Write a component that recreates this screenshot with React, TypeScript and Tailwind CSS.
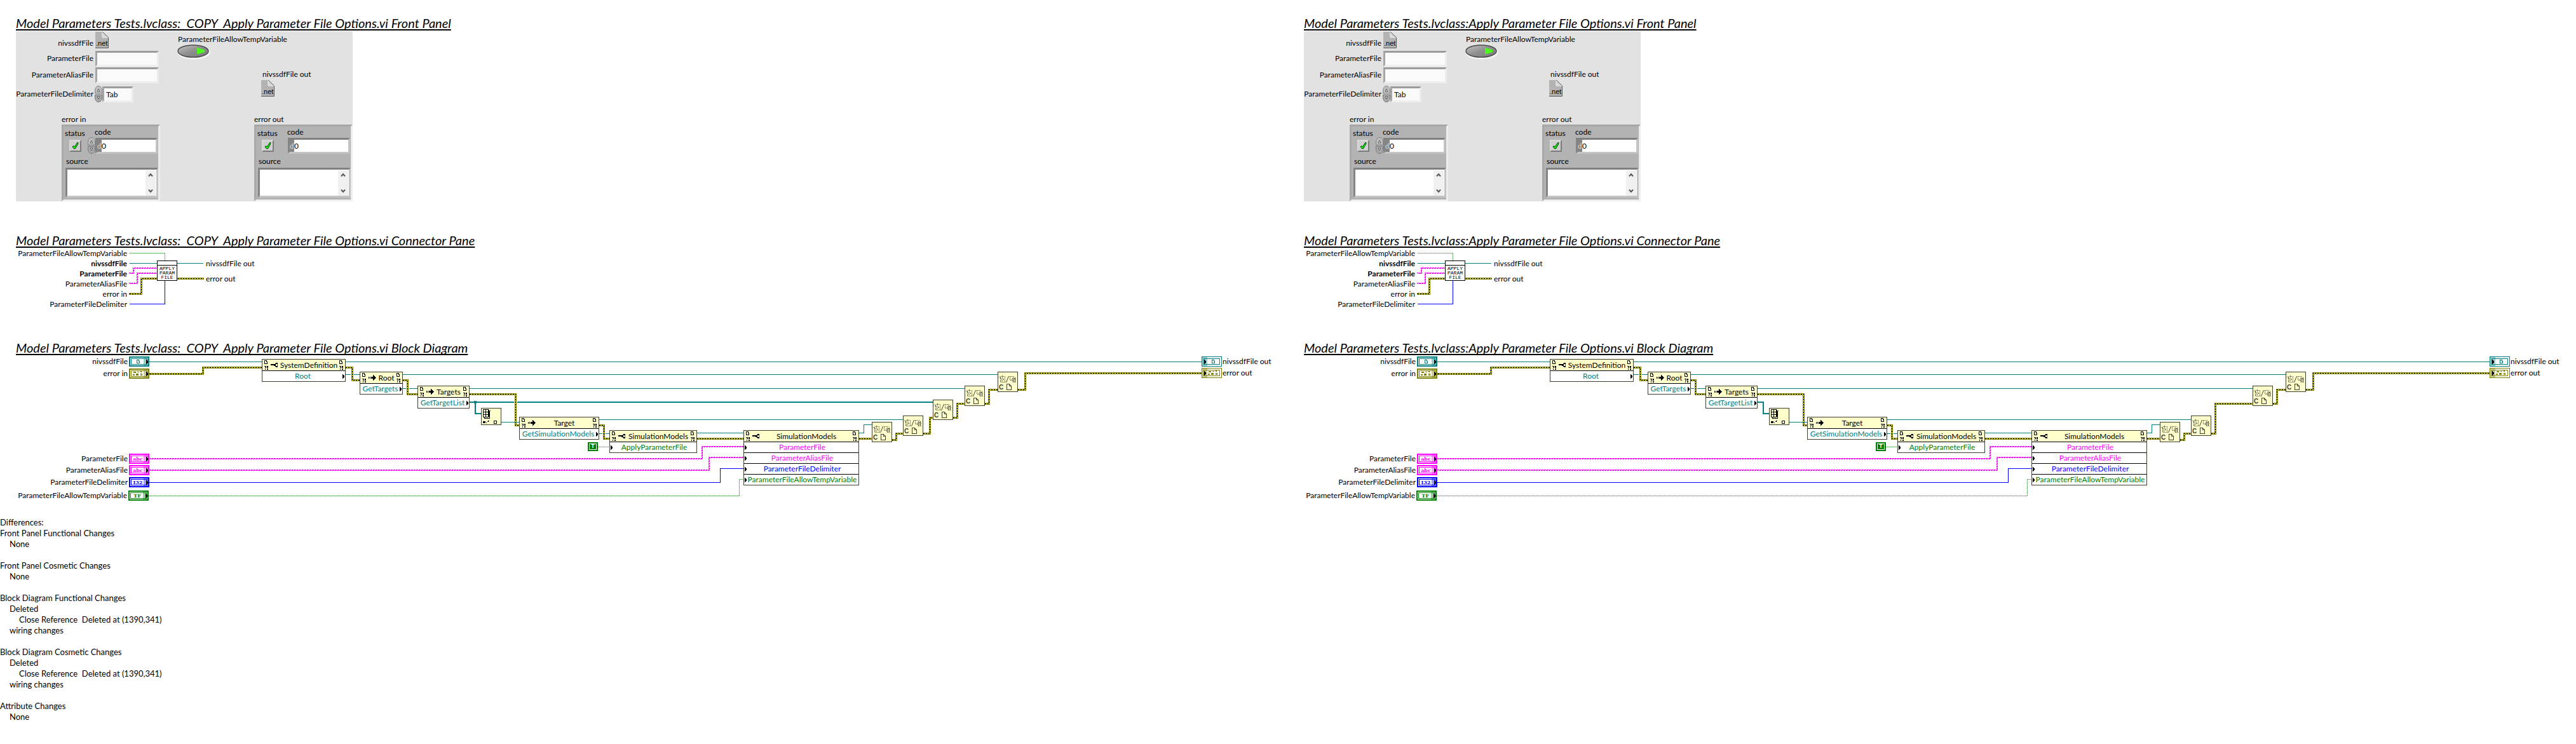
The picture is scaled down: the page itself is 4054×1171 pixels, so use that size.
import { useId, useState } from "react";

type Point = [number, number];

const TEAL = "#008080";
const OLIVE = "#808000";
const PINK = "#ff00ff";
const BLUE = "#0000ff";
const GREEN = "#008000";

const toPoints = (pts: Point[], dx = 0, dy = 0) =>
  pts.map(([x, y]) => `${x + dx},${y + dy}`).join(" ");

/* ---------- Wires ---------- */

function Line({ pts, color, width = 1, dash }: { pts: Point[]; color: string; width?: number; dash?: string }) {
  return <polyline points={toPoints(pts)} fill="none" stroke={color} strokeWidth={width} strokeDasharray={dash} />;
}

function ErrorWire({ pts }: { pts: Point[] }) {
  return (
    <g fill="none">
      <polyline points={toPoints(pts)} stroke="#ffffff" strokeWidth="5" />
      <polyline points={toPoints(pts)} stroke={OLIVE} strokeWidth="3" strokeLinecap="square" />
      <polyline points={toPoints(pts)} stroke="#ffff00" strokeWidth="1" />
      <polyline points={toPoints(pts)} stroke="#000000" strokeWidth="1" strokeDasharray="2 2" />
    </g>
  );
}

function StringWire({ pts }: { pts: Point[] }) {
  return (
    <g fill="none" stroke={PINK} strokeWidth="1">
      <polyline points={toPoints(pts)} strokeDasharray="3 1" />
      <polyline points={toPoints(pts, 1, 1)} strokeDasharray="3 1" strokeDashoffset="2" />
    </g>
  );
}

/* ---------- Small glyphs ---------- */

function NetIcon() {
  return (
    <span className="relative block h-[26px] w-[21px]">
      <svg className="absolute inset-0" width="21" height="26" viewBox="0 0 21 26" aria-hidden="true">
        <path d="M0 0H11L20 9V25H0Z" fill="#b3b3b3" />
        <path d="M11 0V9H20" fill="#d6d6d6" stroke="#f2f2f2" />
        <path d="M11 0L20.5 9V25.5H0" fill="none" stroke="#5a5a5a" />
      </svg>
      <span className="absolute bottom-0 left-px font-['Liberation_Sans'] text-[11px] leading-4 text-black">.net</span>
    </span>
  );
}

function Doc({ color }: { color: string }) {
  return (
    <svg width="5" height="6" viewBox="0 0 5 6" fill="none" stroke={color} aria-hidden="true" shapeRendering="crispEdges">
      <path d="M.5 .5H3.5V2.5H4.5V5.5H.5Z" />
    </svg>
  );
}

function RefMark() {
  return (
    <svg width="6" height="15" viewBox="0 0 6 15" aria-hidden="true" shapeRendering="crispEdges">
      <path d="M.5 .5H3.5V2.5H4.5V5.5H.5Z" fill="none" stroke="#000" />
      <path d="M0 9H3V12H1V11H2V10H0ZM1 13H2V15H1ZM4 9H6V12H4ZM4 13H6V15H4Z" fill="#000" />
    </svg>
  );
}

function KeyGlyph() {
  return (
    <svg width="12" height="9" viewBox="0 0 12 9" aria-hidden="true" shapeRendering="crispEdges">
      <path d="M0 3H7V6H5V5H0ZM7 2H8V7H7ZM8 1H11V3H8ZM8 6H11V8H8ZM10 3H11V4H10ZM10 5H11V6H10Z" fill="#000" />
    </svg>
  );
}

function ArrowGlyph() {
  return (
    <svg width="12" height="9" viewBox="0 0 12 9" aria-hidden="true" shapeRendering="crispEdges">
      <path d="M0 3H1V6H0ZM2 3H3V6H2ZM4 3H8V6H4ZM7 0H8V9H7ZM8 1H9V8H8ZM9 2H10V7H9ZM10 3H11V6H10ZM11 4H12V5H11Z" fill="#000" />
    </svg>
  );
}

function Tip() {
  return (
    <svg width="3" height="7" viewBox="0 0 3 7" aria-hidden="true" shapeRendering="crispEdges">
      <path d="M0 0H1V1H2V2H3V5H2V6H1V7H0Z" fill="#000" />
    </svg>
  );
}

/* ---------- Front panel controls ---------- */

function Spinner({ name }: { name: string }) {
  return (
    <button type="button" aria-label={`Change ${name}`} className="h-[26px] w-3 shrink-0">
      <svg width="12" height="26" viewBox="0 0 12 26" aria-hidden="true">
        <path d="M.5 12V8C.5 3 3 .5 6 .5S11.500 3 11.500 8V12Z" fill="#bdbdbd" stroke="#858585" />
        <path d="M.5 14V18C.5 23 3 25.500 6 25.500S11.500 23 11.500 18V14Z" fill="#a8a8a8" stroke="#777" />
        <path d="M4 9L6 5L8 9Z" fill="#e5e5e5" stroke="#444" strokeWidth=".8" />
        <path d="M4 17L6 21L8 17Z" fill="#e5e5e5" stroke="#444" strokeWidth=".8" />
      </svg>
    </button>
  );
}

const sunken = "border-3 border-t-[#9c9c9c] border-l-[#a6a6a6] border-r-[#ececec] border-b-[#efefef] bg-[#fafafa] outline-none";
const sunkenDark = "border-t-[#808080] border-l-[#858585] border-r-[#c4c4c4] border-b-[#c4c4c4] bg-white";

function Toggle({ labelId }: { labelId: string }) {
  const [on, setOn] = useState(true);
  return (
    <button type="button" role="switch" aria-checked={on} aria-labelledby={labelId} onClick={() => setOn(!on)} className="block">
      <svg width="52" height="24" viewBox="0 0 52 24" aria-hidden="true">
        <defs>
          <linearGradient id="knob" x1="0" y1="0" x2="1" y2="1">
            <stop offset="0" stopColor="#c4c4c4" />
            <stop offset=".5" stopColor="#8e8e8e" />
            <stop offset="1" stopColor="#7a7a7a" />
          </linearGradient>
        </defs>
        <ellipse cx="26" cy="12" rx="26" ry="11.500" fill="#f4f4f4" />
        <ellipse cx="25" cy="10.500" rx="24" ry="9.500" fill="url(#knob)" stroke="#4a4a4a" strokeWidth="1.500" />
        <path d="M31 5L43 8.500V12L31 15.500Z" fill={on ? "#4cf71c" : "#2f6b1f"} />
      </svg>
    </button>
  );
}

function ErrorCluster({ title, control }: { title: string; control: boolean }) {
  const id = useId();
  return (
    <fieldset className="w-[155px]">
      <legend className="leading-[17px]">{title}</legend>
      <div className="h-[121px] border-3 border-t-[#a6a6a6] border-r-[#ededed] border-b-[#efefef] border-l-[#a9a9a9] bg-[#b3b3b3]">
        <div className="flex">
          <div className="w-[35px] pl-[2px]">
            <span id={`${id}-s`} className="block pt-[3px] leading-4">status</span>
            <button type="button" aria-labelledby={`${id}-s`} className="ml-[7px] mt-[2px] block size-[19px] border-2 border-t-[#d8d8d8] border-l-[#d8d8d8] border-r-[#7b7b7b] border-b-[#7b7b7b] bg-[#cfcfcf]">
              <svg width="15" height="15" viewBox="0 0 15 15" aria-hidden="true">
                <path d="M3 9L5 7.500L6.500 9L10.500 2.500H12L11.500 5L7.500 12H5.500Z" fill="#00f800" stroke="#0a3a0a" strokeWidth="1" />
              </svg>
            </button>
          </div>
          <div>
            <label htmlFor={`${id}-c`} className="block pl-[14px] pt-px leading-4">code</label>
            <div className="flex items-center pl-[3px]">
              {control ? <Spinner name="code" /> : <span className="h-[26px] w-3" />}
              <span className={`flex h-[25px] w-[98px] border-3 ${sunkenDark}`}>
                <span className="w-[7px] bg-[#858585] text-[11px] leading-[19px] text-[#d9d9d9]">d</span>
                <input id={`${id}-c`} defaultValue="0" readOnly={!control} className="min-w-0 flex-1 leading-[19px] outline-none" />
              </span>
            </div>
          </div>
        </div>
        <label htmlFor={`${id}-t`} className="mt-1 block pl-1 leading-4">source</label>
        <div className={`ml-[3px] mt-[2px] flex h-[47px] w-[146px] border-3 ${sunkenDark}`}>
          <textarea id={`${id}-t`} readOnly={!control} className="min-w-0 flex-1 resize-none outline-none" />
          <span className="mr-px mt-px flex h-10 w-4 flex-col justify-between bg-[#f0f0f0] py-1">
            <svg width="16" height="6" viewBox="0 0 16 6" fill="none" stroke="#555" strokeWidth="2" aria-hidden="true"><path d="M5 5.500L8 2L11 5.500" /></svg>
            <svg width="16" height="6" viewBox="0 0 16 6" fill="none" stroke="#555" strokeWidth="2" aria-hidden="true"><path d="M5 .5L8 4L11 .5" /></svg>
          </span>
        </div>
      </div>
    </fieldset>
  );
}

function FrontPanel() {
  const id = useId();
  const label = "w-[122px] text-right leading-4";
  return (
    <div className="ml-[25px] flex h-[268px] w-[530px] flex-col bg-[#e2e2e2]">
      <div className="flex h-[130px]">
        <div className="w-[254px]">
          <div className="flex h-[30px] gap-[3px] pt-px">
            <span className={`${label} pt-[10px]`}>nivssdfFile</span>
            <NetIcon />
          </div>
          <div className="flex h-[26px] items-center gap-[3px]">
            <label htmlFor={`${id}-f`} className={label}>ParameterFile</label>
            <input id={`${id}-f`} className={`h-[25px] w-[100px] ${sunken}`} />
          </div>
          <div className="flex h-[26px] items-center gap-[3px]">
            <label htmlFor={`${id}-a`} className={label}>ParameterAliasFile</label>
            <input id={`${id}-a`} className={`h-[25px] w-[100px] ${sunken}`} />
          </div>
          <div className="mt-1 flex h-[26px] items-center">
            <label htmlFor={`${id}-d`} className={`${label} mr-[2px]`}>ParameterFileDelimiter</label>
            <Spinner name="ParameterFileDelimiter" />
            <input id={`${id}-d`} defaultValue="Tab" className={`h-[25px] w-[49px] pl-[3px] ${sunken}`} />
          </div>
        </div>
        <div className="w-[132px] pt-[5px]">
          <span id={`${id}-v`} className="block pl-px leading-4">ParameterFileAllowTempVariable</span>
          <Toggle labelId={`${id}-v`} />
        </div>
        <div className="pt-[60px]">
          <span className="block pb-px pl-[2px] leading-4">nivssdfFile out</span>
          <NetIcon />
        </div>
      </div>
      <div className="flex gap-[148px] pl-[72px]">
        <ErrorCluster title="error in" control />
        <ErrorCluster title="error out" control={false} />
      </div>
    </div>
  );
}

/* ---------- Connector pane ---------- */

const PANE_TOP = 391;
const paneInputs: { name: string; bold?: boolean }[] = [
  { name: "ParameterFileAllowTempVariable" },
  { name: "nivssdfFile", bold: true },
  { name: "ParameterFile", bold: true },
  { name: "ParameterAliasFile" },
  { name: "error in" },
  { name: "ParameterFileDelimiter" },
];

function ConnectorPane() {
  return (
    <div className="relative flex h-[95px]">
      <svg className="absolute left-0 top-0" width="400" height="95" viewBox={`0 ${PANE_TOP} 400 95`} aria-hidden="true" shapeRendering="crispEdges">
        <Line pts={[[204, 398.5], [259.5, 398.5], [259.5, 410]]} color={GREEN} dash="1 1" />
        <Line pts={[[204, 414.5], [320, 414.5]]} color={TEAL} />
        <StringWire pts={[[203, 429.5], [209.5, 429.5], [209.5, 421.5], [247, 421.5]]} />
        <StringWire pts={[[203, 445.5], [215.5, 445.5], [215.5, 429.5], [247, 429.5]]} />
        <ErrorWire pts={[[204, 462.5], [222.5, 462.5], [222.5, 438.5], [319, 438.5]]} />
        <Line pts={[[204, 478.5], [259.5, 478.5], [259.5, 441]]} color={BLUE} />
      </svg>
      <ul className="w-[200px] text-right leading-4">
        {paneInputs.map((p) => (
          <li key={p.name} className={p.bold ? "font-bold" : ""}>{p.name}</li>
        ))}
      </ul>
      <div className="absolute left-[247px] top-[19px] h-8 w-8 border border-black bg-white">
        <div className="h-[7px] border-b border-black" />
        <div className="pt-px text-center font-['Liberation_Mono'] text-[8px] leading-[7px]">
          <div>APPLY</div>
          <div>PARAM</div>
          <div>FILE</div>
        </div>
      </div>
      <ul className="ml-[124px] flex flex-col gap-2 whitespace-nowrap pt-4 leading-4">
        <li>nivssdfFile out</li>
        <li>error out</li>
      </ul>
    </div>
  );
}

/* ---------- Block diagram ---------- */

const TOP = 560;

type Kind = "ref" | "cluster" | "string" | "int" | "bool";

const kindColor: Record<Kind, string> = {
  ref: "border-[#008080] text-[#008080]",
  cluster: "border-[#808000] text-[#808000]",
  string: "border-[#ff00ff] text-[#ff00ff]",
  int: "border-[#0000ff] text-[#0000ff]",
  bool: "border-[#008000] text-[#008000]",
};

const kindTint: Record<Kind, string> = {
  ref: "bg-[#008080]/40",
  cluster: "bg-[#808000]/40",
  string: "bg-[#ff00ff]/40",
  int: "bg-[#0000ff]/40",
  bool: "bg-[#008000]/40",
};

function KindGlyph({ kind }: { kind: Kind }) {
  if (kind === "ref") return <Doc color={TEAL} />;
  if (kind === "cluster")
    return (
      <svg width="16" height="8" viewBox="0 0 16 8" fill={OLIVE} aria-hidden="true" shapeRendering="crispEdges">
        <path d="M1 1H5V3H1ZM7 1H10V2H7ZM0 5H3V7H0ZM5 4H9V7H5ZM12 0H14V2H12Z" />
        <path d="M12.500 4.500H14.500V6.500H12.500Z" fill="none" stroke={OLIVE} />
      </svg>
    );
  const text = kind === "string" ? "abc" : kind === "int" ? "I32" : "TF";
  return <span className="font-['DejaVu_Serif'] text-[8px] font-bold leading-[8px]">{text}</span>;
}

function Terminal({ kind, out = false }: { kind: Kind; out?: boolean }) {
  return (
    <span className={`relative flex h-4 w-8 shrink-0 bg-white p-px ${out ? "border" : "border-2"} ${kindColor[kind]}`}>
      <span className={`flex flex-1 items-center justify-center border border-current ${out ? "m-px pl-1" : "pr-1"}`}>
        <KindGlyph kind={kind} />
      </span>
      <span className={`absolute flex w-[9px] items-center justify-end pr-[2px] ${kindTint[kind]} ${out ? "-inset-y-px -left-px" : "-inset-y-[2px] -right-[2px]"}`}>
        <Tip />
      </span>
    </span>
  );
}

const sources: { name: string; kind: Kind; y: number; end: number }[] = [
  { name: "nivssdfFile", kind: "ref", y: 561, end: 235 },
  { name: "error in", kind: "cluster", y: 580, end: 235 },
  { name: "ParameterFile", kind: "string", y: 714, end: 235 },
  { name: "ParameterAliasFile", kind: "string", y: 732, end: 235 },
  { name: "ParameterFileDelimiter", kind: "int", y: 751, end: 235 },
  { name: "ParameterFileAllowTempVariable", kind: "bool", y: 772, end: 234 },
];

const sinks: { name: string; kind: Kind; y: number }[] = [
  { name: "nivssdfFile out", kind: "ref", y: 561 },
  { name: "error out", kind: "cluster", y: 579 },
];

interface NodeSpec {
  x: number;
  y: number;
  w: number;
  title: string;
  glyph: "key" | "arrow";
  rows: { text: string; color: string; input?: boolean }[];
}

const nodes: NodeSpec[] = [
  { x: 412, y: 565, w: 132, title: "SystemDefinition", glyph: "key", rows: [{ text: "Root", color: "text-[#008080]" }] },
  { x: 566, y: 585, w: 68, title: "Root", glyph: "arrow", rows: [{ text: "GetTargets", color: "text-[#008080]" }] },
  { x: 657, y: 607, w: 82, title: "Targets", glyph: "arrow", rows: [{ text: "GetTargetList", color: "text-[#008080]" }] },
  { x: 817, y: 656, w: 126, title: "Target", glyph: "arrow", rows: [{ text: "GetSimulationModels", color: "text-[#008080]" }] },
  { x: 959, y: 677, w: 138, title: "SimulationModels", glyph: "key", rows: [{ text: "ApplyParameterFile", color: "text-[#008000]", input: true }] },
  {
    x: 1170,
    y: 677,
    w: 182,
    title: "SimulationModels",
    glyph: "key",
    rows: [
      { text: "ParameterFile", color: "text-[#ff00ff]", input: true },
      { text: "ParameterAliasFile", color: "text-[#ff00ff]", input: true },
      { text: "ParameterFileDelimiter", color: "text-[#0000ff]", input: true },
      { text: "ParameterFileAllowTempVariable", color: "text-[#008000]", input: true },
    ],
  },
];

function ClassNode({ node }: { node: NodeSpec }) {
  return (
    <div className="absolute border border-[#404030] bg-white" style={{ left: node.x, top: node.y - TOP, width: node.w }}>
      <div className="flex h-[17px] items-center bg-[#ffffcc] px-[3px]">
        <RefMark />
        <span className="ml-1 w-3">{node.glyph === "key" ? <KeyGlyph /> : <ArrowGlyph />}</span>
        <span className="flex flex-1 justify-center whitespace-nowrap leading-4">
          <span>{node.title}</span>
        </span>
        <RefMark />
      </div>
      {node.rows.map((r) => (
        <div key={r.text} className={`relative flex h-[17px] items-center justify-center border-t border-black ${r.color} ${r.input ? "pl-[3px]" : "pr-[3px]"}`}>
          <span className="whitespace-nowrap leading-4">{r.text}</span>
          <span className={`absolute top-[5px] ${r.input ? "left-px" : "right-px"}`}><Tip /></span>
        </div>
      ))}
    </div>
  );
}

function CloseReference({ x, y }: { x: number; y: number }) {
  return (
    <div className="absolute size-8 border border-[#404030] bg-[#ffffcc]" style={{ left: x, top: y - TOP }}>
      <svg width="30" height="30" viewBox="0 0 30 30" fill="none" stroke="#404030" aria-hidden="true">
        <path d="M3.500 6.500H10.500V15.500H3.500Z" strokeDasharray="1 1" shapeRendering="crispEdges" />
        <path d="M1 7.500H5M3 9.500H8M5 11.500H9M4 13.500H8M6 5.500L9 12" strokeDasharray="1 1" shapeRendering="crispEdges" />
        <path d="M12.500 16L16.500 6" />
        <path d="M18 6.500H25M18.500 7V12.500H22M25.500 9.500L28 12M22 9.500H27M21 11.500H28M22 13.500H28M23 15.500H28M23.500 8V15M26.500 8V16" strokeDasharray="1 1" shapeRendering="crispEdges" />
        <path d="M13.500 18.500H17.500L20.500 21.500V27.500H13.500ZM17.500 18.500V21.500H20.500" shapeRendering="crispEdges" />
      </svg>
      <span className="absolute bottom-px left-px font-['Liberation_Sans'] text-[10px] font-bold leading-[10px] text-[#404030]">C</span>
    </div>
  );
}

function IndexArray() {
  return (
    <div className="absolute left-[757px] top-[82px] h-[27px] w-8 border border-[#404030] bg-[#ffffcc]">
      <svg width="30" height="25" viewBox="0 0 30 25" fill="none" stroke="#000" aria-hidden="true" shapeRendering="crispEdges">
        <path d="M4.500 3.500V15.500H12.500V3.500M11 1.500V13M13 2.500V4" />
        <path d="M2.500 1.500H10.500V13.500H2.500ZM2.500 5.500H10.500M2.500 9.500H10.500M6.500 1.500V13.500" fill="#ffffcc" />
        <path d="M2 20H6V23H2ZM7 22H8V23H7ZM9 20H11V21H9ZM10 19H12V20H10Z" fill="#000" stroke="none" />
        <path d="M19.500 19.500H23.500V23.500H19.500Z" />
      </svg>
    </div>
  );
}

interface Variant {
  closers: Point[];
  listToCloser: boolean;
  bridge: Point[][];
}

const copyVariant: Variant = {
  closers: [[1372, 664], [1421, 654], [1468, 629], [1518, 607], [1570, 585]],
  listToCloser: true,
  bridge: [
    [[1453, 682.5], [1463.5, 682.5], [1463.5, 657.5], [1468, 657.5]],
    [[1500, 657.5], [1506.5, 657.5], [1506.5, 635.5], [1518, 635.5]],
  ],
};

const originalVariant: Variant = {
  closers: [[1372, 664], [1421, 654], [1518, 607], [1570, 585]],
  listToCloser: false,
  bridge: [[[1453, 682.5], [1459.5, 682.5], [1459.5, 635.5], [1518, 635.5]]],
};

function BlockDiagram({ variant }: { variant: Variant }) {
  return (
    <div className="relative h-[230px]">
      <svg className="absolute left-0 top-0" width="1900" height="230" viewBox={`0 ${TOP} 1900 230`} aria-hidden="true" shapeRendering="crispEdges">
        <Line pts={[[235, 569.5], [1891, 569.5]]} color={TEAL} />
        <Line pts={[[544, 589.5], [1570, 589.5]]} color={TEAL} />
        <Line pts={[[634, 611.5], [1518, 611.5]]} color={TEAL} />
        {variant.listToCloser && (
          <>
            <Line pts={[[739, 633], [1468, 633]]} color={TEAL} width={2} />
            <circle cx="748" cy="633" r="2.500" fill={TEAL} />
          </>
        )}
        <Line pts={[[739, 633], [748, 633], [748, 651], [757, 651]]} color={TEAL} width={2} />
        <ErrorWire pts={[[236, 588.5], [319.5, 588.5], [319.5, 578.5], [412, 578.5]]} />
        <ErrorWire pts={[[544, 578.5], [554.5, 578.5], [554.5, 598.5], [566, 598.5]]} />
        <ErrorWire pts={[[634, 598.5], [641.5, 598.5], [641.5, 620.5], [657, 620.5]]} />
        <ErrorWire pts={[[739, 620.5], [811.5, 620.5], [811.5, 669.5], [817, 669.5]]} />
        <Line pts={[[789, 664.5], [817, 664.5]]} color={TEAL} />
        <Line pts={[[943, 660.5], [1421, 660.5]]} color={TEAL} />
        <Line pts={[[943, 682.5], [959, 682.5]]} color={TEAL} />
        <ErrorWire pts={[[943, 669.5], [950.5, 669.5], [950.5, 690.5], [959, 690.5]]} />
        <Line pts={[[1097, 681.5], [1170, 681.5]]} color={TEAL} />
        <ErrorWire pts={[[1097, 690.5], [1170, 690.5]]} />
        <Line pts={[[941, 703.5], [959, 703.5]]} color={GREEN} dash="1 1" />
        <StringWire pts={[[235, 721.5], [1104.5, 721.5], [1104.5, 702.5], [1170, 702.5]]} />
        <StringWire pts={[[235, 739.5], [1115.5, 739.5], [1115.5, 719.5], [1170, 719.5]]} />
        <Line pts={[[235, 759.5], [1133.5, 759.5], [1133.5, 737.5], [1170, 737.5]]} color={BLUE} />
        <Line pts={[[234, 780.5], [1163.5, 780.5], [1163.5, 754.5], [1170, 754.5]]} color={GREEN} dash="1 1" />
        <Line pts={[[1352, 681.5], [1359.5, 681.5], [1359.5, 668.5], [1372, 668.5]]} color={TEAL} />
        <ErrorWire pts={[[1352, 690.5], [1372, 690.5]]} />
        <ErrorWire pts={[[1404, 692.5], [1410.5, 692.5], [1410.5, 682.5], [1421, 682.5]]} />
        {variant.bridge.map((pts, i) => (
          <ErrorWire key={i} pts={pts} />
        ))}
        <ErrorWire pts={[[1550, 635.5], [1556.5, 635.5], [1556.5, 613.5], [1570, 613.5]]} />
        <ErrorWire pts={[[1602, 613.5], [1613.5, 613.5], [1613.5, 587.5], [1891, 587.5]]} />
      </svg>

      {sources.map((s) => (
        <div key={s.name} className="absolute left-0 flex h-4 items-center justify-end gap-[2px] whitespace-nowrap leading-4" style={{ top: s.y - TOP, width: s.end }}>
          <span>{s.name}</span>
          <Terminal kind={s.kind} />
        </div>
      ))}
      {nodes.map((n) => (
        <ClassNode key={n.x} node={n} />
      ))}
      <IndexArray />
      <div className="absolute left-[925px] top-[136px] h-[14px] w-4 border-2 border-[#008000] bg-white p-px">
        <div className="flex h-full items-center justify-center bg-[#008000] font-['Liberation_Mono'] text-[9px] font-bold leading-[8px] text-white">T</div>
      </div>
      {variant.closers.map(([x, y]) => (
        <CloseReference key={x} x={x} y={y} />
      ))}
      {sinks.map((s) => (
        <div key={s.name} className="absolute left-[1891px] flex h-4 items-center gap-px whitespace-nowrap leading-4" style={{ top: s.y - TOP }}>
          <Terminal kind={s.kind} out />
          <span>{s.name}</span>
        </div>
      ))}
    </div>
  );
}

/* ---------- Page ---------- */

function Title({ children }: { children: string }) {
  return (
    <h2 className="ml-[25px] whitespace-pre pb-[2px] font-[Lato] text-[20px] italic leading-[22px] underline decoration-2 underline-offset-2 [text-decoration-skip-ink:none]">
      {children}
    </h2>
  );
}

function ViColumn({ name, variant }: { name: string; variant: Variant }) {
  return (
    <section className="min-w-0 pt-[25px]">
      <Title>{`${name} Front Panel`}</Title>
      <FrontPanel />
      <div className="h-[50px]" />
      <Title>{`${name} Connector Pane`}</Title>
      <ConnectorPane />
      <div className="h-[50px]" />
      <Title>{`${name} Block Diagram`}</Title>
      <BlockDiagram variant={variant} />
    </section>
  );
}

const report: { title: string; lines: { text: string; deep?: boolean }[] }[] = [
  { title: "Front Panel Functional Changes", lines: [{ text: "None" }] },
  { title: "Front Panel Cosmetic Changes", lines: [{ text: "None" }] },
  {
    title: "Block Diagram Functional Changes",
    lines: [{ text: "Deleted" }, { text: "Close Reference  Deleted at (1390,341)", deep: true }, { text: "wiring changes" }],
  },
  {
    title: "Block Diagram Cosmetic Changes",
    lines: [{ text: "Deleted" }, { text: "Close Reference  Deleted at (1390,341)", deep: true }, { text: "wiring changes" }],
  },
  { title: "Attribute Changes", lines: [{ text: "None" }] },
];

export default function App() {
  return (
    <main className="min-h-screen bg-white font-[Lato,sans-serif] text-[12px] text-black">
      <div className="grid grid-cols-2">
        <ViColumn name="Model Parameters Tests.lvclass:  COPY  Apply Parameter File Options.vi" variant={copyVariant} />
        <ViColumn name="Model Parameters Tests.lvclass:Apply Parameter File Options.vi" variant={originalVariant} />
      </div>
      <section className="whitespace-pre pt-6 text-[13px] leading-[17px]">
        <h3>Differences:</h3>
        <div className="flex flex-col gap-[17px]">
          {report.map((group) => (
            <div key={group.title}>
              <h4>{group.title}</h4>
              {group.lines.map((line) => (
                <p key={line.text} className={line.deep ? "pl-[30px]" : "pl-[15px]"}>{line.text}</p>
              ))}
            </div>
          ))}
        </div>
      </section>
    </main>
  );
}
